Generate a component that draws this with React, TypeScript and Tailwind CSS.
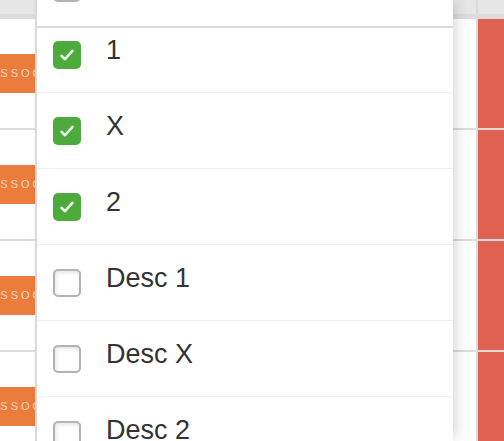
import React from 'react';

const font = "font-['Liberation_Sans','Helvetica_Neue',Arial,sans-serif]";

const Checkbox = ({ checked }: { checked: boolean }) =>
  checked ? (
    <div className="w-[28px] h-[28px] rounded-[5px] bg-[#4dab3b] flex items-center justify-center shrink-0">
      <svg width="16" height="14" viewBox="0 0 16 14" fill="none">
        <path d="M2.5 7.8 L6 11.2 L13.5 2.8" stroke="rgba(255,255,255,0.88)" strokeWidth="2.6" strokeLinecap="round" strokeLinejoin="round" />
      </svg>
    </div>
  ) : (
    <div className="w-[28px] h-[28px] rounded-[5px] border-2 border-[#b3b3b3] bg-white shadow-[inset_1px_2px_4px_rgba(0,0,0,0.1)] shrink-0" />
  );

const options = [
  { label: '1', checked: true },
  { label: 'X', checked: true },
  { label: '2', checked: true },
  { label: 'Desc 1', checked: false },
  { label: 'Desc X', checked: false },
  { label: 'Desc 2', checked: false },
];

export default function App() {
  const rows = [0, 1, 2, 3];

  return (
    <div className={`relative w-[504px] h-[441px] overflow-hidden bg-white ${font}`}>
      {/* table underneath */}
      <div className="flex flex-col">
        <div className="flex">
          <div className="w-[478px] border-r-2 border-[#dadada]">
            <div className="h-[14px] bg-[#e6e6e6]" />
            <div className="h-[5px] bg-[#dcdcdc]" />
          </div>
          <div className="flex-1">
            <div className="h-[14px] bg-[#e6e6e6]" />
            <div className="h-[5px] bg-[#dcdcdc]" />
          </div>
        </div>
        {rows.map((r) => (
          <div key={r} className="flex h-[111px] border-b-2 border-[#dcdcdc]">
            <div className="w-[478px] border-r-2 border-[#dadada] pt-[35px]">
              <div className="w-[70px] h-[39px] bg-[#ec7c3b] flex items-center overflow-hidden">
                <span className="ml-[-10px] text-[11px] tracking-[3px] text-white/70 whitespace-nowrap">ASSOC</span>
              </div>
            </div>
            <div className="flex-1 bg-[#e06252]" />
          </div>
        ))}
      </div>

      {/* dropdown menu */}
      <div className="absolute left-[35px] top-0 w-[418px] h-[441px] bg-white border-l-2 border-[#d8d8d8] shadow-[6px_0_12px_-2px_rgba(0,0,0,0.14)] flex flex-col">
        <div className="h-[28px] border-b-2 border-[#dadada] overflow-hidden pl-[16px] shrink-0">
          <div className="mt-[-26px]">
            <Checkbox checked={false} />
          </div>
        </div>
        <div className="flex-1 overflow-hidden">
          <div className="mt-[-11px]">
            {options.map((o) => (
              <div key={o.label} className="h-[76px] border-b border-[#efefef] flex items-center pl-[16px]">
                <Checkbox checked={o.checked} />
                <span className="ml-[25px] mb-[8px] text-[27px] text-[#333333] leading-none">{o.label}</span>
              </div>
            ))}
          </div>
        </div>
      </div>
    </div>
  );
}
